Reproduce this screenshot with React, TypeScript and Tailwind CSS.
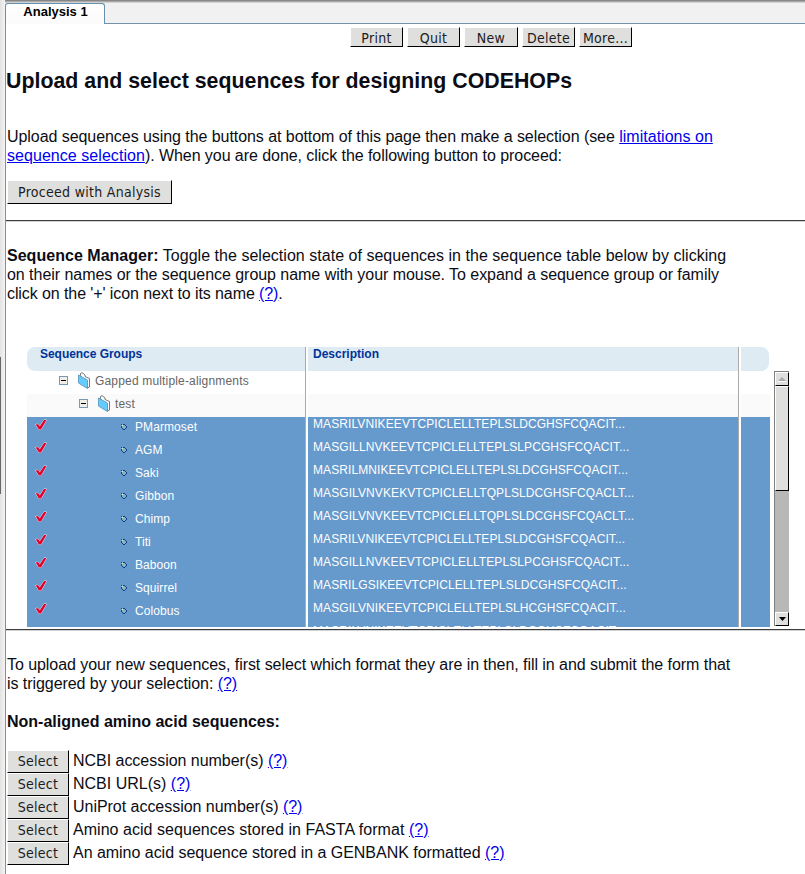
import React from "react";

const names = ["PMarmoset", "AGM", "Saki", "Gibbon", "Chimp", "Titi", "Baboon", "Squirrel", "Colobus", ""];
const descriptions = [
  "MASRILVNIKEEVTCPICLELLTEPLSLDCGHSFCQACIT...",
  "MASGILLNVKEEVTCPICLELLTEPLSLPCGHSFCQACIT...",
  "MASRILMNIKEEVTCPICLELLTEPLSLDCGHSFCQACIT...",
  "MASGILVNVKEKVTCPICLELLTQPLSLDCGHSFCQACLT...",
  "MASGILVNVKEEVTCPICLELLTQPLSLDCGHSFCQACLT...",
  "MASRILVNIKEEVTCPICLELLTEPLSLDCGHSFCQACIT...",
  "MASGILLNVKEEVTCPICLELLTEPLSLPCGHSFCQACIT...",
  "MASRILGSIKEEVTCPICLELLTEPLSLDCGHSFCQACIT...",
  "MASGILVNIKEEVTCPICLELLTEPLSLHCGHSFCQACIT...",
  "MASRILVNIKEEVTCPICLELLTEPLSLDCGHSFCQACIT...",
];
const uploads = [
  { text: "NCBI accession number(s)", tracking: "tracking-[-0.03px]" },
  { text: "NCBI URL(s)", tracking: "tracking-normal" },
  { text: "UniProt accession number(s)", tracking: "tracking-[-0.03px]" },
  { text: "Amino acid sequences stored in FASTA format", tracking: "tracking-[0.04px]" },
  { text: "An amino acid sequence stored in a GENBANK formatted", tracking: "tracking-[-0.03px]" },
];
const toolbar = [
  { label: "Print", size: "w-[53px] pt-[2px]" },
  { label: "Quit", size: "w-[53px] pt-[2px]" },
  { label: "New", size: "w-[54px] pt-[2px]" },
  { label: "Delete", size: "w-[53px] pt-[2px]" },
  { label: "More...", size: "w-[53px] pt-[2px]" },
];

function Button({ label, size }: { label: string; size: string }) {
  return (
    <button
      className={`flex shrink-0 items-center justify-center border border-t-white border-r-black border-b-black border-l-white bg-[#dfdfdd] font-['DejaVu_Sans_Condensed','DejaVu_Sans',sans-serif] text-[14px] leading-none tracking-[0.28px] font-stretch-condensed whitespace-nowrap text-[#1c1c1c] ${size}`}
    >
      {label}
    </button>
  );
}

function Link({ children }: { children: React.ReactNode }) {
  return <a href="#" className="text-[#0000ee] underline">{children}</a>;
}

function Minus() {
  return (
    <svg className="h-[9px] w-[9px] shrink-0" viewBox="0 0 9 9" shapeRendering="crispEdges">
      <rect x=".5" y=".5" width="8" height="8" fill="#f0eee8" stroke="#7898b5" />
      <path d="M2 4.5h5" stroke="#000" />
    </svg>
  );
}

function Folder() {
  return (
    <svg className="h-[17px] w-[13px] shrink-0" viewBox="0 0 13 17">
      <path d="M2.5 3.5V1.5L4 .6l3 2.4v1.5l4.5 2v8.5l-2 .8L3 5z" fill="#fff" stroke="#555" strokeWidth=".8" />
      <path d="M.5 3l4.5 2.5L9.5 8v8.5l-5-3-4-2.5z" fill="#66ccff" stroke="#4c91b8" strokeWidth=".8" />
    </svg>
  );
}

function Check() {
  return (
    <svg className="h-[12px] w-[12px] shrink-0" viewBox="0 0 12 12">
      <path d="M.6 5.3h2.6l1.5 2.3L9 1h2.5L6 10.5H3.9z" fill="#e4002b" stroke="#fff" strokeWidth=".8" paintOrder="stroke" />
    </svg>
  );
}

function Bullet() {
  return (
    <svg className="h-[7px] w-[7px] shrink-0" viewBox="0 0 7 7" shapeRendering="crispEdges">
      <path d="M2 1h3v1h1v3H5v1H2V5H1V2h1z" fill="#86b5b8" />
      <path d="M1 1h1v1H1zM3 1h2v1H3zM5 2h1v1H5zM6 3h1v2H6zM1 3h1v2H1zM2 5h1v1H2zM3 6h2v1H3zM5 5h1v1H5z" fill="#123c94" />
      <path d="M2 2h1v1H2z" fill="#d5e8ee" />
    </svg>
  );
}

function Divider() {
  return <div className="h-[2px] shrink-0 border-t border-b border-t-[#3d3d3d] border-b-[#d2d2d2]" />;
}

function GroupRow({ label, className }: { label: string; className: string }) {
  return (
    <div className={`flex h-[23px] items-center pb-[4px] tracking-[0.17px] text-[#666] ${className}`}>
      <Minus />
      <div className="ml-[10px] flex h-[17px] items-center gap-[4px]">
        <Folder />
        <span>{label}</span>
      </div>
    </div>
  );
}

function SequenceTable() {
  return (
    <div className="ml-[21px] flex h-[280px] shrink-0 text-[12px] leading-[14px]">
      <div className="flex h-[280px] w-[743px] overflow-hidden">
        <div className="w-[278px] shrink-0">
          <div className="h-[24px] rounded-l-[8px] bg-[#deebf3] pl-[13px] font-bold tracking-[-0.04px] text-[#003399]">Sequence Groups</div>
          <GroupRow label="Gapped multiple-alignments" className="pl-[32px]" />
          <GroupRow label="test" className="bg-[#fafafa] pl-[52px]" />
          {names.map((name, i) => (
            <div key={i} className="flex h-[23px] bg-[#6699cc] pl-[8px] tracking-[0.08px] text-white">
              {name && (
                <>
                  <div className="pt-[2px]"><Check /></div>
                  <div className="ml-[73px] pt-[6px]"><Bullet /></div>
                  <span className="ml-[8px] pt-[3px]">{name}</span>
                </>
              )}
            </div>
          ))}
        </div>
        <div className="w-px shrink-0 bg-[#aaa]" />
        <div className="ml-[2px] w-[430px] shrink-0">
          <div className="h-[24px] bg-[#deebf3] pl-[5px] font-bold text-[#003399]">Description</div>
          <div className="h-[23px]" />
          <div className="h-[23px] bg-[#fafafa]" />
          {descriptions.map((text, i) => (
            <div key={i} className="h-[23px] bg-[#6699cc] pl-[5px] tracking-[0.09px] text-white">{text}</div>
          ))}
        </div>
        <div className="w-px shrink-0 bg-[#aaa]" />
        <div className="ml-[2px] w-[29px] shrink-0">
          <div className="mr-px h-[24px] rounded-r-[8px] bg-[#deebf3]" />
          <div className="h-[23px]" />
          <div className="h-[23px] bg-[#fafafa]" />
          <div className="h-[210px] bg-[#6699cc]" />
        </div>
      </div>
      <div className="mt-[24px] ml-[4px] flex h-[255px] w-[15px] flex-col border-t border-l border-[#808080] bg-[#b8b8b6]">
        <div className="flex h-[14px] shrink-0 items-center justify-center border border-t-white border-r-black border-b-black border-l-white bg-[#dfdfdd]">
          <svg className="h-[5px] w-[8px]" viewBox="0 0 8 5"><path d="M0 4L4 0l4 4z" fill="#aaa" /><path d="M0 4.5h8" stroke="#fff" /></svg>
        </div>
        <div className="h-[105px] shrink-0 border border-t-white border-r-black border-b-black border-l-white bg-[#dfdfdd]" />
        <div className="mt-auto flex h-[14px] shrink-0 items-center justify-center border border-t-white border-r-black border-b-black border-l-white bg-[#dfdfdd]">
          <svg className="h-[4px] w-[7px]" viewBox="0 0 7 4"><path d="M0 0h7L3.5 4z" fill="#000" /></svg>
        </div>
      </div>
    </div>
  );
}

export default function App() {
  return (
    <div className="flex h-[874px] w-[805px] overflow-hidden bg-white font-['Liberation_Sans',Arial,sans-serif] text-[16px] leading-[19px] text-[#0c0c14]">
      <div className="flex w-[5px] shrink-0 flex-col bg-gradient-to-r from-[#e2e2e2] to-[#f4f4f4]">
        <div className="mt-[357px] h-[137px] w-px bg-[#666]" />
      </div>
      <div className="flex w-[800px] shrink-0 flex-col">
        <header className="flex h-[24px] shrink-0 bg-gradient-to-b from-[#757575] via-[#f1f1f1] via-[14%] to-[#f1f1f1]">
          <div className="mt-[3px] flex h-[21px] w-[100px] justify-center rounded-t-[3px] border border-b-0 border-[#6590b0] bg-gradient-to-b from-white to-[#fafafa] pl-px text-[13px] leading-[16px] font-bold text-black">
            Analysis 1
          </div>
          <div className="flex-1 border-b border-[#7092aa]" />
        </header>
        <main className="flex flex-1 flex-col border-l border-[#7992a5]">
          <div className="mt-[3px] ml-[344px] flex h-[20px] gap-[4px]">
            {toolbar.map((item) => <Button key={item.label} label={item.label} size={item.size} />)}
          </div>
          <h1 className="mt-[21px] h-[26px] text-[21.33px] leading-[26px] font-bold tracking-[0.015px]">Upload and select sequences for designing CODEHOPs</h1>
          <p className="mt-[33px] ml-px w-[740px] tracking-[-0.06px]">
            Upload sequences using the buttons at bottom of this page then make a selection (see <span className="tracking-[0.02px]"><Link>limitations on</Link></span>
            <br />
            <span className="tracking-[0.05px]"><Link>sequence selection</Link></span>). When you are done, click the following button to proceed:
          </p>
          <div className="mt-[15px] ml-px flex h-[24px]"><Button label="Proceed with Analysis" size="w-[165px]" /></div>
          <div className="mt-[16px]"><Divider /></div>
          <p className="mt-[24px] ml-px w-[740px]">
            <span className="tracking-[0.027px]"><b>Sequence Manager:</b> Toggle the selection state of sequences in the sequence table below by clicking</span>
            <br /><span className="tracking-[-0.04px]">on their names or the sequence group name with your mouse. To expand a sequence group or family</span>
            <br /><span className="tracking-[-0.09px]">click on the '+' icon next to its name <Link>(?)</Link>.</span>
          </p>
          <div className="mt-[44px]"><SequenceTable /></div>
          <div className="mt-[2px]"><Divider /></div>
          <p className="mt-[24px] ml-px w-[740px] tracking-[-0.057px]">
            To upload your new sequences, first select which format they are in then, fill in and submit the form that
            <br />is triggered by your selection: <Link>(?)</Link>
          </p>
          <h2 className="mt-[19px] ml-px font-bold">Non-aligned amino acid sequences:</h2>
          <div className="mt-[19px] ml-px flex flex-col">
            {uploads.map(({ text, tracking }) => (
              <div key={text} className="flex h-[23px] gap-[4px]">
                <Button label="Select" size="w-[62px] pb-[2px]" />
                <span className={`pt-px ${tracking}`}>{text} <Link>(?)</Link></span>
              </div>
            ))}
          </div>
        </main>
      </div>
    </div>
  );
}
